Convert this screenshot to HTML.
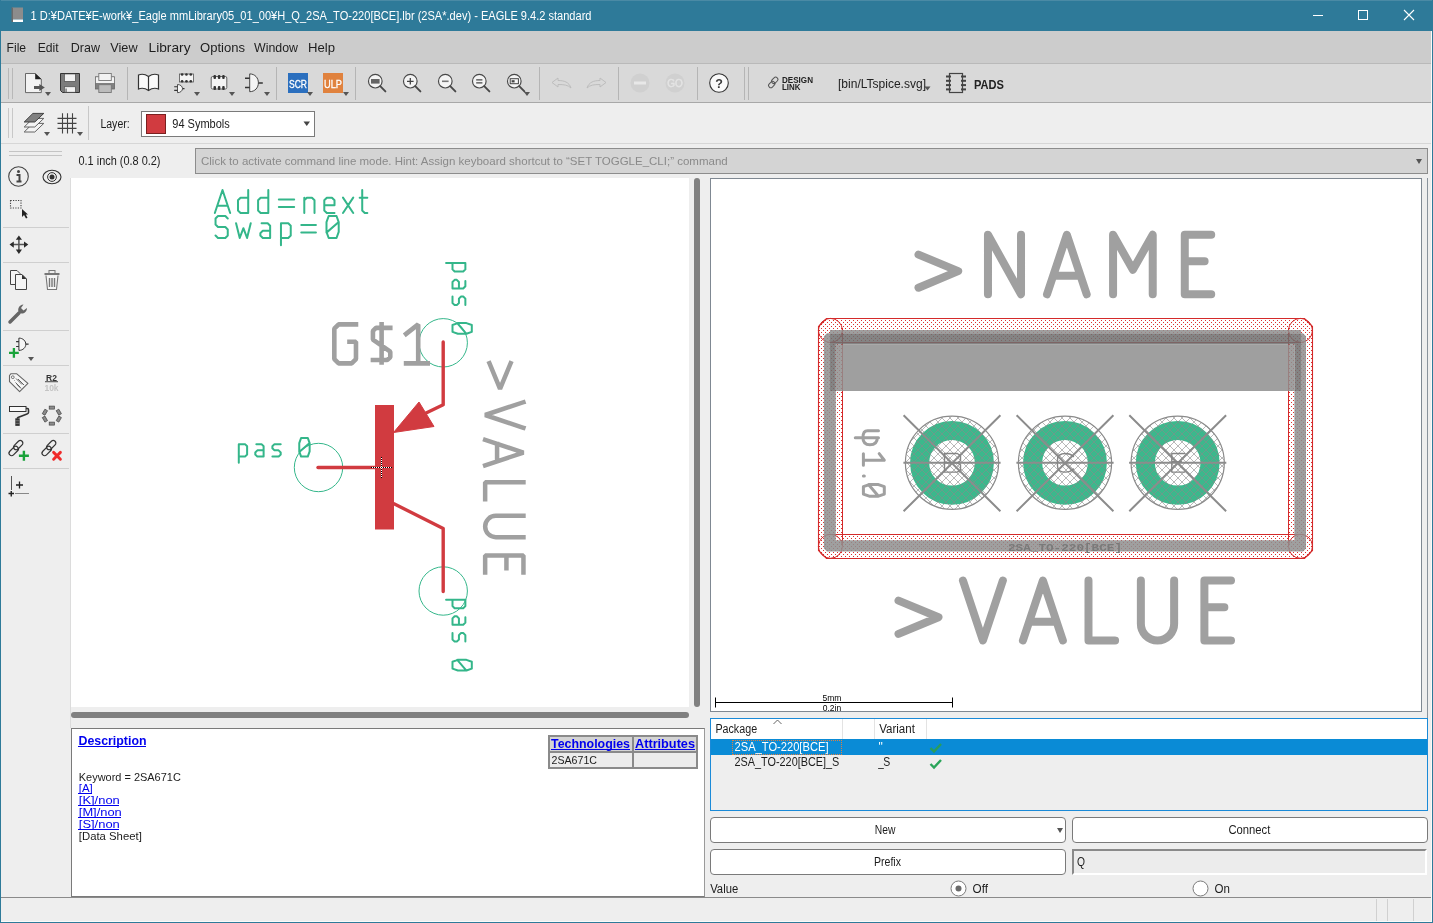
<!DOCTYPE html>
<html><head><meta charset="utf-8"><style>
html,body{margin:0;padding:0}
body{width:1433px;height:923px;overflow:hidden;position:relative;background:#eeeeee;font-family:"Liberation Sans",sans-serif}
.t{position:absolute;white-space:nowrap;line-height:0;height:0}
.t span{display:inline-block;line-height:normal;transform-origin:0 0}
svg{position:absolute;overflow:visible}
#wrap{position:absolute;left:0;top:0;width:1433px;height:923px;will-change:transform;overflow:hidden}
</style></head><body><div id="wrap">
<div style="position:absolute;left:0px;top:0px;width:1433px;height:31px;background:#2e7a99"></div>
<div style="position:absolute;left:0px;top:0px;width:1433px;height:1px;background:#4a8aa5"></div>
<div style="position:absolute;left:0px;top:31px;width:1433px;height:32px;background:#cccccc"></div>
<div style="position:absolute;left:0px;top:63px;width:1433px;height:1px;background:#b9b9b9"></div>
<div style="position:absolute;left:0px;top:64px;width:1433px;height:38px;background:#d9d9d9"></div>
<div style="position:absolute;left:0px;top:102px;width:1433px;height:1px;background:#a8a8a8"></div>
<div style="position:absolute;left:0px;top:103px;width:1433px;height:40px;background:#eeeeee"></div>
<div style="position:absolute;left:0px;top:143px;width:1433px;height:1px;background:#d6d6d6"></div>
<div style="position:absolute;left:0px;top:0px;width:1px;height:923px;background:#2e7a99"></div>
<div style="position:absolute;left:1432px;top:0px;width:1px;height:923px;background:#2e7a99"></div>
<div style="position:absolute;left:1431px;top:31px;width:1px;height:891px;background:#fafafa"></div>
<div style="position:absolute;left:0px;top:922px;width:1433px;height:1px;background:#2e7a99"></div>

<svg style="left:11px;top:7px" width="13" height="16" viewBox="0 0 13 16"><rect x="1" y="0.5" width="11" height="12" fill="#8c8c8c"/><rect x="1" y="12.5" width="11" height="2.5" fill="#ffffff"/><rect x="0.5" y="0.5" width="1.5" height="14.5" fill="#6a6a6a"/></svg>
<svg style="left:1300px;top:0px" width="131" height="31" viewBox="0 0 131 31"><rect x="13" y="15" width="10" height="1" fill="#fff"/><rect x="58.5" y="10.5" width="9" height="9" fill="none" stroke="#fff" stroke-width="1"/><path d="M104 10 L114 20 M114 10 L104 20" stroke="#fff" stroke-width="1.1"/></svg>








<svg style="left:7px;top:68px" width="8" height="31" viewBox="0 0 8 31"><rect x="1" y="0" width="1" height="31" fill="#b8b8b8"/><rect x="5" y="0" width="1" height="31" fill="#b8b8b8"/></svg>
<svg style="left:24px;top:72px" width="22" height="22" viewBox="0 0 22 22"><path d="M1.5 1.5 L11 1.5 L17.3 7.3 L17.3 20.6 L1.5 20.6 Z" fill="#f2f2f2" stroke="#5a5a5a" stroke-width="0.9"/><path d="M11.2 1.2 L17.6 7.3 L11.2 7.3 Z" fill="#222"/><path d="M10 15.5 L16.5 15.5" stroke="#555" stroke-width="3"/><path d="M15.3 12 L20.8 15.5 L15.3 19 Z" fill="#555"/></svg>
<svg style="left:45px;top:92px" width="7" height="5" viewBox="0 0 7 5"><path d="M0 0 L6 0 L3 4 Z" fill="#555"/></svg>
<svg style="left:60px;top:73px" width="20" height="20" viewBox="0 0 20 20"><path d="M0.5 0.5 L19.5 0.5 L19.5 19.5 L2.5 19.5 L0.5 17.5 Z" fill="#7c7c7c" stroke="#333" stroke-width="1"/><rect x="4.5" y="1" width="10.8" height="7.3" fill="#f2f2f2" stroke="#444" stroke-width="0.6"/><rect x="4.5" y="13.8" width="10.8" height="5.4" fill="#f2f2f2" stroke="#444" stroke-width="0.6"/><rect x="5.6" y="15.5" width="0.9" height="3.5" fill="#333"/></svg>
<svg style="left:95px;top:73px" width="20" height="20" viewBox="0 0 20 20"><rect x="0.5" y="3.8" width="19" height="12.2" fill="#808080" stroke="#666" stroke-width="0.8"/><rect x="0.9" y="4.2" width="18.2" height="5.8" fill="#f2f2f2"/><rect x="3.8" y="0.5" width="12.5" height="7" fill="#f2f2f2" stroke="#777" stroke-width="0.9"/><rect x="3.8" y="11.7" width="12.5" height="7.8" fill="#bcbcbc" stroke="#777" stroke-width="0.9"/></svg>
<svg style="left:127px;top:67px" width="1" height="33" viewBox="0 0 1 33"><rect x="0" y="0" width="1" height="33" fill="#b5b5b5"/></svg>
<svg style="left:138px;top:73px" width="21" height="19" viewBox="0 0 21 19"><path d="M10.5 3.5 C7 1 3 1 0.5 2 L0.5 16 C3 15 7 15 10.5 17.5 C14 15 18 15 20.5 16 L20.5 2 C18 1 14 1 10.5 3.5 Z M10.5 3.5 L10.5 17.5" fill="#fafafa" stroke="#333" stroke-width="1.2"/></svg>
<svg style="left:170px;top:70px" width="28" height="26" viewBox="0 0 28 26"><rect x="9.5" y="4" width="14" height="8" fill="#f4f4f4" stroke="#555" stroke-width="0.8"/><circle cx="12.10" cy="4.5" r="1.3" fill="#333"/><circle cx="12.10" cy="11.3" r="1.3" fill="#333"/><circle cx="16.45" cy="4.5" r="1.3" fill="#333"/><circle cx="16.45" cy="11.3" r="1.3" fill="#333"/><circle cx="20.80" cy="4.5" r="1.3" fill="#333"/><circle cx="20.80" cy="11.3" r="1.3" fill="#333"/><path d="M7.5 14.5 C10.5 14.5 12.5 16.5 12.5 18.6 C12.5 20.7 10.5 22.7 7.5 22.7 Z" fill="#f6f6f6" stroke="#444" stroke-width="0.9"/><path d="M4.2 16.8 L7.5 16.8 M4.2 20.4 L7.5 20.4 M12.5 18.6 L14.5 18.6" stroke="#333" stroke-width="1.1"/></svg>
<svg style="left:194px;top:92px" width="7" height="5" viewBox="0 0 7 5"><path d="M0 0 L6 0 L3 4 Z" fill="#555"/></svg>
<svg style="left:208px;top:70px" width="22" height="24" viewBox="0 0 22 24"><rect x="3.2" y="6.5" width="15.6" height="12.5" rx="1.5" fill="#f4f4f4" stroke="#555" stroke-width="0.9"/><rect x="5.50" y="5" width="2.5" height="4" rx="1" fill="#333"/><rect x="5.50" y="16" width="2.5" height="4" rx="1" fill="#333"/><rect x="9.85" y="5" width="2.5" height="4" rx="1" fill="#333"/><rect x="9.85" y="16" width="2.5" height="4" rx="1" fill="#333"/><rect x="14.20" y="5" width="2.5" height="4" rx="1" fill="#333"/><rect x="14.20" y="16" width="2.5" height="4" rx="1" fill="#333"/></svg>
<svg style="left:229px;top:92px" width="7" height="5" viewBox="0 0 7 5"><path d="M0 0 L6 0 L3 4 Z" fill="#555"/></svg>
<svg style="left:244px;top:70px" width="22" height="24" viewBox="0 0 22 24"><path d="M5.7 3.9 C11 3.9 14.4 8 14.4 12.8 C14.4 17.6 11 21.7 5.7 21.7 Z" fill="#f4f4f4" stroke="#444" stroke-width="1"/><path d="M1 8.2 L5.7 8.2 M1 17.4 L5.7 17.4 M14.4 13 L18.8 13" stroke="#333" stroke-width="1.5"/></svg>
<svg style="left:264px;top:92px" width="7" height="5" viewBox="0 0 7 5"><path d="M0 0 L6 0 L3 4 Z" fill="#555"/></svg>
<svg style="left:276px;top:67px" width="1" height="33" viewBox="0 0 1 33"><rect width="1" height="33" fill="#b5b5b5"/></svg>
<svg style="left:288px;top:73px" width="20" height="20" viewBox="0 0 20 20"><rect width="20" height="20" fill="#2b6fbe"/><text x="1" y="14.8" font-size="11.5" fill="#fff" textLength="18" lengthAdjust="spacingAndGlyphs" stroke="#fff" stroke-width="0.3">SCR</text></svg>
<svg style="left:307px;top:92px" width="7" height="5" viewBox="0 0 7 5"><path d="M0 0 L6 0 L3 4 Z" fill="#555"/></svg>
<svg style="left:323px;top:73px" width="20" height="20" viewBox="0 0 20 20"><rect width="20" height="20" fill="#e0823e"/><text x="1" y="14.8" font-size="11.5" fill="#fff" textLength="18" lengthAdjust="spacingAndGlyphs" stroke="#fff" stroke-width="0.3">ULP</text></svg>
<svg style="left:343px;top:92px" width="7" height="5" viewBox="0 0 7 5"><path d="M0 0 L6 0 L3 4 Z" fill="#555"/></svg>
<svg style="left:355px;top:67px" width="1" height="33" viewBox="0 0 1 33"><rect width="1" height="33" fill="#b5b5b5"/></svg>
<svg style="left:368px;top:73px" width="20" height="20" viewBox="0 0 20 20"><circle cx="7.3" cy="8.2" r="6.8" fill="#f4f4f4" stroke="#484848" stroke-width="1.15"/><path d="M12.2 13.2 L17.4 18.4" stroke="#484848" stroke-width="1.9" stroke-linecap="round"/><rect x="3" y="6" width="8.6" height="4.6" fill="#666"/></svg>
<svg style="left:403px;top:73px" width="20" height="20" viewBox="0 0 20 20"><circle cx="7.3" cy="8.2" r="6.8" fill="#f4f4f4" stroke="#484848" stroke-width="1.15"/><path d="M12.2 13.2 L17.4 18.4" stroke="#484848" stroke-width="1.9" stroke-linecap="round"/><path d="M4 8.3 L10.6 8.3 M7.3 5 L7.3 11.6" stroke="#444" stroke-width="1.3"/></svg>
<svg style="left:438px;top:73px" width="20" height="20" viewBox="0 0 20 20"><circle cx="7.3" cy="8.2" r="6.8" fill="#f4f4f4" stroke="#484848" stroke-width="1.15"/><path d="M12.2 13.2 L17.4 18.4" stroke="#484848" stroke-width="1.9" stroke-linecap="round"/><path d="M4 8.3 L10.6 8.3" stroke="#777" stroke-width="1.6"/></svg>
<svg style="left:472px;top:73px" width="20" height="20" viewBox="0 0 20 20"><circle cx="7.3" cy="8.2" r="6.8" fill="#f4f4f4" stroke="#484848" stroke-width="1.15"/><path d="M12.2 13.2 L17.4 18.4" stroke="#484848" stroke-width="1.9" stroke-linecap="round"/><path d="M4.2 6.8 L10.4 6.8 M4.2 9.8 L10.4 9.8" stroke="#444" stroke-width="1.2"/></svg>
<svg style="left:507px;top:73px" width="20" height="20" viewBox="0 0 20 20"><circle cx="7.3" cy="8.2" r="6.8" fill="#f4f4f4" stroke="#484848" stroke-width="1.15"/><path d="M12.2 13.2 L17.4 18.4" stroke="#484848" stroke-width="1.9" stroke-linecap="round"/><rect x="3.2" y="5.7" width="8.2" height="5" fill="none" stroke="#444" stroke-width="1"/><rect x="4.6" y="7.2" width="3" height="2.2" fill="#444"/></svg>
<svg style="left:524px;top:92px" width="7" height="5" viewBox="0 0 7 5"><path d="M0 0 L6 0 L3 4 Z" fill="#555"/></svg>
<svg style="left:539px;top:67px" width="1" height="33" viewBox="0 0 1 33"><rect width="1" height="33" fill="#b5b5b5"/></svg>
<svg style="left:551px;top:77px" width="21" height="12" viewBox="0 0 21 12"><path d="M1 5.5 L7 1 L7 3.5 C13 3.5 18 5 20 11 C17 8 13 7.5 7 7.5 L7 10 Z" fill="none" stroke="#bdbdbd" stroke-width="1"/></svg>
<svg style="left:586px;top:77px" width="21" height="12" viewBox="0 0 21 12"><path d="M20 5.5 L14 1 L14 3.5 C8 3.5 3 5 1 11 C4 8 8 7.5 14 7.5 L14 10 Z" fill="none" stroke="#bdbdbd" stroke-width="1"/></svg>
<svg style="left:618px;top:67px" width="1" height="33" viewBox="0 0 1 33"><rect width="1" height="33" fill="#b5b5b5"/></svg>
<svg style="left:630px;top:73px" width="20" height="20" viewBox="0 0 20 20"><circle cx="10" cy="10" r="9.5" fill="#d0d0d0"/><rect x="4" y="8.5" width="12" height="3" fill="#e8e8e8"/></svg>
<svg style="left:665px;top:73px" width="20" height="20" viewBox="0 0 20 20"><circle cx="10" cy="10" r="9.5" fill="#d0d0d0"/><text x="10" y="14" font-size="10" fill="#e4e4e4" text-anchor="middle" stroke="#e4e4e4" stroke-width="0.4">GO</text></svg>
<svg style="left:697px;top:67px" width="1" height="33" viewBox="0 0 1 33"><rect width="1" height="33" fill="#b5b5b5"/></svg>
<svg style="left:709px;top:73px" width="20" height="20" viewBox="0 0 20 20"><circle cx="10" cy="10" r="9.3" fill="#fafafa" stroke="#333" stroke-width="1.1"/><text x="10" y="14.6" font-size="12.5" font-weight="bold" fill="#3a3a3a" text-anchor="middle">?</text></svg>
<svg style="left:744px;top:67px" width="6" height="33" viewBox="0 0 6 33"><rect x="0" width="1" height="33" fill="#b5b5b5"/><rect x="4" width="1" height="33" fill="#b5b5b5"/></svg>
<svg style="left:767px;top:76px" width="13" height="13" viewBox="0 0 13 13"><g fill="none" stroke="#555" stroke-width="1"><rect x="5.5" y="0.8" width="4.5" height="7" rx="2.2" transform="rotate(45 7.7 4.3)"/><rect x="2.5" y="5" width="4.5" height="7" rx="2.2" transform="rotate(45 4.7 8.5)"/></g></svg>
<svg style="left:7px;top:108px" width="8" height="30" viewBox="0 0 8 30"><rect x="1" width="1" height="30" fill="#c8c8c8"/><rect x="5" width="1" height="30" fill="#c8c8c8"/></svg>
<svg style="left:20px;top:108px" width="30" height="30" viewBox="0 0 30 30"><path d="M4.2 24 L12.9 15.4 L23.8 15.4 L14.8 24 Z" fill="#f4f4f4" stroke="#555" stroke-width="0.9"/><path d="M4.2 19 L12.9 10.4 L23.8 10.4 L14.8 19 Z" fill="#f4f4f4" stroke="#555" stroke-width="0.9"/><path d="M4.2 14 L12.9 5.4 L23.8 5.4 L14.8 14 Z" fill="#808080" stroke="#333" stroke-width="0.9"/></svg>
<svg style="left:44px;top:132px" width="7" height="5" viewBox="0 0 7 5"><path d="M0 0 L6 0 L3 4 Z" fill="#555"/></svg>
<svg style="left:55px;top:108px" width="25" height="26" viewBox="0 0 25 26"><path d="M2.5 10.4 H21.5 M2.5 15.4 H21.5 M2.5 20.4 H21.5 M7.5 5.2 V25.5 M12.5 5.2 V25.5 M17.5 5.2 V25.5" stroke="#444" stroke-width="1.1"/></svg>
<svg style="left:77px;top:132px" width="7" height="5" viewBox="0 0 7 5"><path d="M0 0 L6 0 L3 4 Z" fill="#555"/></svg>
<svg style="left:88px;top:106px" width="1" height="34" viewBox="0 0 1 34"><rect width="1" height="34" fill="#c8c8c8"/></svg>



<svg style="left:924px;top:86px" width="8" height="6"><path d="M0.5 0.5 L6.5 0.5 L3.5 4.5 Z" fill="#555"/></svg>
<svg style="left:946px;top:73px" width="21" height="21"><rect x="3.5" y="0.5" width="13" height="19" fill="none" stroke="#444" stroke-width="1.2"/><rect x="0" y="2.5" width="5" height="2" fill="#444"/><rect x="15" y="2.5" width="5" height="2" fill="#444"/><rect x="0" y="6.8" width="5" height="2" fill="#444"/><rect x="15" y="6.8" width="5" height="2" fill="#444"/><rect x="0" y="11.1" width="5" height="2" fill="#444"/><rect x="15" y="11.1" width="5" height="2" fill="#444"/><rect x="0" y="15.4" width="5" height="2" fill="#444"/><rect x="15" y="15.4" width="5" height="2" fill="#444"/></svg>

<div style="position:absolute;left:141px;top:111px;width:174px;height:26px;background:#fff;border:1px solid #7a7a7a;box-sizing:border-box"></div>
<div style="position:absolute;left:146px;top:114px;width:20px;height:20px;background:#d13b40;border:1px solid #7a2020;box-sizing:border-box"></div>

<svg style="left:303px;top:121px" width="8" height="6"><path d="M0.5 0.5 L7 0.5 L3.75 5 Z" fill="#444"/></svg>

<div style="position:absolute;left:1px;top:144px;width:69px;height:753px;background:#eeeeee"></div>
<svg style="left:9px;top:150px" width="54" height="7" viewBox="0 0 54 7"><rect x="0" y="1" width="53" height="1" fill="#c4c4c4"/><rect x="0" y="5" width="53" height="1" fill="#c4c4c4"/></svg>
<svg style="left:3px;top:227px" width="66" height="1" viewBox="0 0 66 1"><rect width="66" height="1" fill="#cfcfcf"/></svg>
<svg style="left:3px;top:262px" width="66" height="1" viewBox="0 0 66 1"><rect width="66" height="1" fill="#cfcfcf"/></svg>
<svg style="left:3px;top:330px" width="66" height="1" viewBox="0 0 66 1"><rect width="66" height="1" fill="#cfcfcf"/></svg>
<svg style="left:3px;top:365px" width="66" height="1" viewBox="0 0 66 1"><rect width="66" height="1" fill="#cfcfcf"/></svg>
<svg style="left:3px;top:433px" width="66" height="1" viewBox="0 0 66 1"><rect width="66" height="1" fill="#cfcfcf"/></svg>
<svg style="left:3px;top:468px" width="66" height="1" viewBox="0 0 66 1"><rect width="66" height="1" fill="#cfcfcf"/></svg>
<svg style="left:8px;top:166px" width="22" height="22" viewBox="0 0 22 22"><circle cx="10.5" cy="10.5" r="9.8" fill="none" stroke="#444" stroke-width="1.1"/><circle cx="10.5" cy="5.5" r="1.5" fill="#444"/><path d="M8.5 9 L11.5 9 L11.5 15 M8.5 15.5 L13.5 15.5" stroke="#444" stroke-width="2" fill="none"/></svg>
<svg style="left:41px;top:167px" width="22" height="20" viewBox="0 0 22 20"><ellipse cx="11" cy="10" rx="9" ry="6.7" fill="none" stroke="#333" stroke-width="1.1"/><circle cx="11" cy="10" r="4.4" fill="none" stroke="#333" stroke-width="1"/><circle cx="11" cy="10" r="2.5" fill="#333"/></svg>
<svg style="left:9px;top:199px" width="21" height="21" viewBox="0 0 21 21"><rect x="1.5" y="1.5" width="10.5" height="7.5" fill="none" stroke="#444" stroke-width="1.1" stroke-dasharray="1.2 1.3"/><path d="M13 10 L13 18 L15 16 L17 19.5 L18.5 18.8 L16.8 15.5 L19 15.5 Z" fill="#222"/></svg>
<svg style="left:9px;top:235px" width="20" height="20" viewBox="0 0 20 20"><path d="M3 9.6 H16.8 M9.9 3 V16.4" stroke="#555" stroke-width="1.5"/><path d="M9.9 0.4 L6.8 4.7 L13 4.7 Z M9.9 18.9 L6.8 14.6 L13 14.6 Z M0.5 9.6 L4.8 6.5 L4.8 12.7 Z M19.3 9.6 L15 6.5 L15 12.7 Z" fill="#2a2a2a"/></svg>
<svg style="left:10px;top:270px" width="18" height="20" viewBox="0 0 18 20"><path d="M0.5 0.5 L7 0.5 L10 3.5 L10 14.5 L0.5 14.5 Z" fill="#f4f4f4" stroke="#444"/><path d="M5.5 4.5 L12 4.5 L16.5 9 L16.5 19.5 L5.5 19.5 Z" fill="#f4f4f4" stroke="#444"/><path d="M12 4.5 L16.5 9 L12 9 Z" fill="#333"/></svg>
<svg style="left:44px;top:270px" width="16" height="20" viewBox="0 0 16 20"><rect x="0.5" y="3" width="15" height="2" fill="#777"/><rect x="5" y="0.5" width="6" height="3" fill="none" stroke="#777"/><path d="M2 5.5 L3.5 19.5 L12.5 19.5 L14 5.5" fill="#f6f6f6" stroke="#777" stroke-width="1.1"/><path d="M5.5 8 V17 M8 8 V17 M10.5 8 V17" stroke="#777" stroke-width="1.4"/></svg>
<svg style="left:8px;top:303px" width="21" height="21" viewBox="0 0 21 21"><path d="M2 19 L11 10" stroke="#666" stroke-width="3.5" stroke-linecap="round"/><path d="M11 10 C9 6 11 2 15.5 1.5 L13 5 L15.5 7.5 L19 5 C19 9.5 15 11.5 11 10 Z" fill="#666"/></svg>
<svg style="left:8px;top:337px" width="27" height="24" viewBox="0 0 27 24"><path d="M10.9 1.1 C15 1.1 17.8 4 17.8 7.2 C17.8 10.5 15 13.4 10.9 13.4 Z" fill="#f6f6f6" stroke="#333" stroke-width="1"/><path d="M8.1 4.7 L10.9 4.7 M8.1 9.5 L10.9 9.5 M17.8 7.1 L20.6 7.1" stroke="#333" stroke-width="1.2"/><path d="M1 15.8 L10.8 15.8 M5.9 11 L5.9 20.8" stroke="#1aa33a" stroke-width="2.3"/></svg>
<svg style="left:28px;top:357px" width="7" height="5" viewBox="0 0 7 5"><path d="M0 0 L6 0 L3 4 Z" fill="#555"/></svg>
<svg style="left:44px;top:373px" width="16" height="19" viewBox="0 0 16 19"><text x="7.5" y="8" font-size="8.5" font-weight="bold" fill="#333" text-anchor="middle">R2</text><rect x="1" y="8.3" width="13" height="0.9" fill="#333"/><text x="7.5" y="17.5" font-size="8.5" font-weight="bold" fill="#c4c4c4" text-anchor="middle">10k</text></svg>
<svg style="left:0px;top:360px" width="70" height="70" viewBox="0 0 70 70"><path d="M9.5 15.5 L9.5 21.6 L19.6 31.7 L27.9 23.4 L16.5 13.7 L11 13.7 Z" fill="#f6f6f6" stroke="#666" stroke-width="1.1" stroke-linejoin="round"/><circle cx="12.8" cy="17.2" r="1.4" fill="none" stroke="#666" stroke-width="0.9"/><path d="M14.5 20.5 L15 21 M16 18.5 L22 24.5 M15.5 22.5 L20.5 27.5 M18 19 L24 25 M17 24.5 L21 28.5" stroke="#555" stroke-width="0.9"/><rect x="9.5" y="46.5" width="16.5" height="5" fill="#fafafa" stroke="#333" stroke-width="1"/><path d="M26 48.5 L27.5 48.5 Q28.5 48.5 28.5 50 L28.5 52.5 Q28.5 53.5 27 54 L18 57.5 L17 58.5" fill="none" stroke="#333" stroke-width="1.6"/><rect x="15.3" y="58.3" width="4.4" height="7.6" fill="#333"/><path d="M15.3 60.8 H19.7 M15.3 63.3 H19.7" stroke="#999" stroke-width="0.7"/><rect x="49.2" y="46.1" width="5.2" height="3" fill="#8c8c8c" stroke="#444" stroke-width="0.7" transform="rotate(0 51.8 47.6)"/><rect x="49.2" y="62.1" width="5.2" height="3" fill="#8c8c8c" stroke="#444" stroke-width="0.7" transform="rotate(0 51.8 63.6)"/><rect x="42.3" y="50.7" width="5.2" height="3" fill="#8c8c8c" stroke="#444" stroke-width="0.7" transform="rotate(-60 44.9 52.2)"/><rect x="56.2" y="50.7" width="5.2" height="3" fill="#8c8c8c" stroke="#444" stroke-width="0.7" transform="rotate(60 58.8 52.2)"/><rect x="42.3" y="57.6" width="5.2" height="3" fill="#8c8c8c" stroke="#444" stroke-width="0.7" transform="rotate(60 44.9 59.1)"/><rect x="56.2" y="57.6" width="5.2" height="3" fill="#8c8c8c" stroke="#444" stroke-width="0.7" transform="rotate(-60 58.8 59.1)"/></svg>
<svg style="left:8px;top:441px" width="26" height="24" viewBox="0 0 26 24"><g fill="none" stroke="#333" stroke-width="1.2"><rect x="4.7" y="1.5" width="11" height="5.2" rx="2.6" transform="rotate(-45 10.2 4.1)"/><rect x="0.2" y="7.4" width="11" height="5.2" rx="2.6" transform="rotate(-45 5.7 10)"/></g><path d="M10.9 14.8 L20.9 14.8 M15.9 9.8 L15.9 19.8" stroke="#1aa33a" stroke-width="2.4"/></svg>
<svg style="left:41px;top:441px" width="26" height="24" viewBox="0 0 26 24"><g fill="none" stroke="#333" stroke-width="1.2"><rect x="4.7" y="1.5" width="11" height="5.2" rx="2.6" transform="rotate(-45 10.2 4.1)"/><rect x="0.2" y="7.4" width="11" height="5.2" rx="2.6" transform="rotate(-45 5.7 10)"/></g><path d="M12.6 11.4 L19.4 18.2 M19.4 11.4 L12.6 18.2" stroke="#f02a2a" stroke-width="2.9" stroke-linecap="round"/></svg>
<svg style="left:0px;top:470px" width="40" height="30" viewBox="0 0 40 30"><path d="M11.5 6 L11.5 20" stroke="#555" stroke-width="1"/><path d="M15 23.5 L29 23.5" stroke="#888" stroke-width="1"/><path d="M8.5 23.5 L14 23.5 M11.25 21 L11.25 26.5" stroke="#222" stroke-width="1.4"/><path d="M16 15 L23 15 M19.5 11.5 L19.5 18.5" stroke="#222" stroke-width="1.3"/></svg>

<div style="position:absolute;left:195px;top:148px;width:1233px;height:26px;background:#d4d4d4;border:1px solid #8c8c8c;box-sizing:border-box"></div>

<svg style="position:absolute;left:1413px;top:156px" width="12" height="10"><path d="M3 3 L9 3 L6 8 Z" fill="#555"/></svg>
<div style="position:absolute;left:71px;top:178px;width:618px;height:529px;background:#ffffff"></div>
<div style="position:absolute;left:70px;top:178px;width:1px;height:550px;background:#dcdcdc"></div>
<div style="position:absolute;left:689px;top:178px;width:20px;height:529px;background:#eeeeee"></div>
<div style="position:absolute;left:694px;top:178px;width:6px;height:529px;background:#808080;border-radius:3px"></div>
<div style="position:absolute;left:71px;top:707px;width:638px;height:21px;background:#eeeeee"></div>
<div style="position:absolute;left:71px;top:712px;width:618px;height:6px;background:#808080;border-radius:3px"></div>
<div style="position:absolute;left:710px;top:178px;width:712px;height:534px;background:#ffffff;border:1px solid #7f8892;box-sizing:border-box"></div>
<div style="position:absolute;left:1427px;top:178px;width:1px;height:540px;background:#8a939c"></div>
<div style="position:absolute;left:71px;top:728px;width:634px;height:169px;background:#ffffff;border:1px solid #7a7a7a;border-right:1px solid #9a9a9a;box-sizing:border-box"></div>







<div style="position:absolute;left:548px;top:735px;width:150px;height:34px;background:#8a8a8a"></div>
<div style="position:absolute;left:550px;top:737px;width:82px;height:14px;background:#d4d4d4"></div>
<div style="position:absolute;left:634px;top:737px;width:62px;height:14px;background:#d4d4d4"></div>
<div style="position:absolute;left:550px;top:753px;width:82px;height:14px;background:#ececec"></div>
<div style="position:absolute;left:634px;top:753px;width:62px;height:14px;background:#ececec"></div>



<div style="position:absolute;left:710px;top:718px;width:718px;height:93px;background:#eeeeee;border:1px solid #1a8ad8;box-sizing:border-box"></div>
<div style="position:absolute;left:711px;top:719px;width:716px;height:20px;background:#ffffff"></div>
<div style="position:absolute;left:842px;top:719px;width:1px;height:20px;background:#e3e3e3"></div>
<div style="position:absolute;left:874px;top:719px;width:1px;height:20px;background:#e3e3e3"></div>
<div style="position:absolute;left:926px;top:719px;width:1px;height:20px;background:#e3e3e3"></div>

<svg style="position:absolute;left:772px;top:718px" width="12" height="8"><path d="M1.5 6 L5.5 2 L9.5 6" fill="none" stroke="#666" stroke-width="1"/></svg>

<div style="position:absolute;left:711px;top:739px;width:716px;height:16px;background:#0a8bd6"></div>
<div style="position:absolute;left:732px;top:739.5px;width:110px;height:15px;border:1px dotted #e08040;box-sizing:border-box"></div>





<svg style="position:absolute;left:929px;top:742px" width="14" height="12"><path d="M1.5 6 L5 9.5 L12 2" fill="none" stroke="#2a9d5a" stroke-width="2.4"/></svg>
<svg style="position:absolute;left:929px;top:758px" width="14" height="12"><path d="M1.5 6 L5 9.5 L12 2" fill="none" stroke="#2aa55a" stroke-width="2.4"/></svg>
<div style="position:absolute;left:710px;top:817px;width:356px;height:26px;background:#ffffff;border:1px solid #7a7a7a;border-radius:4px;box-sizing:border-box"></div>

<svg style="position:absolute;left:1055px;top:826px" width="10" height="8"><path d="M2 2 L8 2 L5 7 Z" fill="#555"/></svg>
<div style="position:absolute;left:1072px;top:817px;width:356px;height:26px;background:#ffffff;border:1px solid #7a7a7a;border-radius:4px;box-sizing:border-box"></div>

<div style="position:absolute;left:710px;top:849px;width:356px;height:26px;background:#ffffff;border:1px solid #7a7a7a;border-radius:4px;box-sizing:border-box"></div>

<div style="position:absolute;left:1072px;top:849px;width:355px;height:26px;background:#ececec;border-top:2px solid #8a8a8a;border-left:2px solid #8a8a8a;border-bottom:2px solid #fff;border-right:2px solid #fff;box-sizing:border-box"></div>


<svg style="position:absolute;left:950px;top:880px" width="18" height="18"><circle cx="8.5" cy="8.5" r="7.5" fill="#fff" stroke="#7a7a7a"/><circle cx="8.5" cy="8.5" r="3" fill="#6a6a6a"/></svg>

<svg style="position:absolute;left:1192px;top:880px" width="18" height="18"><circle cx="8.5" cy="8.5" r="7.5" fill="#fff" stroke="#7a7a7a"/></svg>

<div style="position:absolute;left:1px;top:897px;width:1430px;height:1px;background:#8a8a8a"></div>
<div style="position:absolute;left:1px;top:898px;width:1430px;height:23px;background:#eeeeee"></div>
<div style="position:absolute;left:1px;top:921px;width:1430px;height:1px;background:#fafafa"></div>
<div style="position:absolute;left:1376px;top:899px;width:1px;height:22px;background:#d0d0d0"></div>
<div style="position:absolute;left:1387px;top:899px;width:1px;height:22px;background:#d0d0d0"></div>
<div style="position:absolute;left:1413px;top:899px;width:1px;height:22px;background:#d0d0d0"></div>
<svg style="left:0;top:0" width="1433" height="923"><defs><clipPath id="lc"><rect x="71" y="178" width="618" height="529"/></clipPath></defs><g clip-path="url(#lc)"><path d="M 214.83 213.00 L 222.50 190.00 L 230.17 213.00 M 217.39 205.84 L 227.61 205.84 M 248.21 190.00 L 248.21 213.00 L 240.54 213.00 L 237.99 210.44 L 237.99 200.22 L 240.54 197.67 L 248.21 197.67 M 268.31 190.00 L 268.31 213.00 L 260.64 213.00 L 258.09 210.44 L 258.09 200.22 L 260.64 197.67 L 268.31 197.67 M 278.83 199.46 L 294.17 199.46 M 278.83 207.12 L 294.17 207.12 M 304.29 197.67 L 304.29 213.00 M 304.29 200.22 L 306.84 197.67 L 311.96 197.67 L 314.51 200.22 L 314.51 213.00 M 324.29 205.33 L 334.51 205.33 L 334.51 200.22 L 331.96 197.67 L 326.84 197.67 L 324.29 200.22 L 324.29 210.44 L 326.84 213.00 L 334.51 213.00 M 342.99 197.67 L 353.21 213.00 M 342.99 213.00 L 353.21 197.67 M 362.22 190.00 L 362.22 210.44 L 364.78 213.00 L 367.33 213.00 M 359.67 197.67 L 367.33 197.67" fill="none" stroke="#34b68a" stroke-width="2" stroke-linecap="round" stroke-linejoin="round"/><path d="M 227.76 218.44 L 225.32 216.00 L 217.98 216.00 L 215.54 218.44 L 215.54 224.56 L 217.98 227.00 L 225.32 227.00 L 227.76 229.44 L 227.76 235.56 L 225.32 238.00 L 217.98 238.00 L 215.54 235.56 M 236.07 223.33 L 239.73 238.00 L 243.40 228.22 L 247.07 238.00 L 250.73 223.33 M 261.58 223.33 L 267.69 223.33 L 270.14 225.78 L 270.14 238.00 L 262.81 238.00 L 260.36 235.56 L 260.36 233.11 L 262.81 230.67 L 270.14 230.67 M 280.96 245.33 L 280.96 223.33 L 288.29 223.33 L 290.74 225.78 L 290.74 235.56 L 288.29 238.00 L 280.96 238.00 M 301.27 225.04 L 315.93 225.04 M 301.27 232.38 L 315.93 232.38 M 328.69 216.00 L 336.51 216.00 L 338.71 222.11 L 338.71 231.89 L 336.51 238.00 L 328.69 238.00 L 326.49 231.89 L 326.49 222.11 Z M 326.49 232.62 L 338.71 222.11" fill="none" stroke="#34b68a" stroke-width="2" stroke-linecap="round" stroke-linejoin="round"/><path d="M 238.79 462.83 L 238.79 444.13 L 245.03 444.13 L 247.11 446.21 L 247.11 454.52 L 245.03 456.60 L 238.79 456.60 M 256.33 444.13 L 261.53 444.13 L 263.61 446.21 L 263.61 456.60 L 257.37 456.60 L 255.29 454.52 L 255.29 452.44 L 257.37 450.37 L 263.61 450.37 M 280.71 444.13 L 274.47 444.13 L 272.39 446.21 L 272.39 448.29 L 274.47 450.37 L 278.63 450.37 L 280.71 452.44 L 280.71 454.52 L 278.63 456.60 L 272.39 456.60 M 301.13 437.90 L 307.77 437.90 L 309.64 443.09 L 309.64 451.41 L 307.77 456.60 L 301.13 456.60 L 299.26 451.41 L 299.26 443.09 Z M 299.26 452.03 L 309.64 443.09" fill="none" stroke="#34b68a" stroke-width="2" stroke-linecap="round" stroke-linejoin="round"/><path d="M 446.07 262.96 L 465.37 262.96 L 465.37 269.39 L 463.22 271.54 L 454.64 271.54 L 452.50 269.39 L 452.50 262.96 M 465.37 280.93 L 465.37 286.29 L 463.22 288.44 L 452.50 288.44 L 452.50 282.01 L 454.64 279.86 L 456.79 279.86 L 458.93 282.01 L 458.93 288.44 M 465.37 305.09 L 465.37 298.66 L 463.22 296.51 L 461.08 296.51 L 458.93 298.66 L 458.93 302.94 L 456.79 305.09 L 454.64 305.09 L 452.50 302.94 L 452.50 296.51 M 471.80 325.02 L 471.80 331.88 L 466.44 333.81 L 457.86 333.81 L 452.50 331.88 L 452.50 325.02 L 457.86 323.09 L 466.44 323.09 Z M 457.22 323.09 L 466.44 333.81" fill="none" stroke="#34b68a" stroke-width="2" stroke-linecap="round" stroke-linejoin="round"/><path d="M 446.07 599.66 L 465.37 599.66 L 465.37 606.09 L 463.22 608.24 L 454.64 608.24 L 452.50 606.09 L 452.50 599.66 M 465.37 617.28 L 465.37 622.64 L 463.22 624.79 L 452.50 624.79 L 452.50 618.36 L 454.64 616.21 L 456.79 616.21 L 458.93 618.36 L 458.93 624.79 M 465.37 641.59 L 465.37 635.16 L 463.22 633.01 L 461.08 633.01 L 458.93 635.16 L 458.93 639.44 L 456.79 641.59 L 454.64 641.59 L 452.50 639.44 L 452.50 633.01 M 471.80 661.77 L 471.80 668.63 L 466.44 670.56 L 457.86 670.56 L 452.50 668.63 L 452.50 661.77 L 457.86 659.84 L 466.44 659.84 Z M 457.22 659.84 L 466.44 670.56" fill="none" stroke="#34b68a" stroke-width="2" stroke-linecap="round" stroke-linejoin="round"/><circle cx="443.2" cy="342.8" r="24.2" fill="none" stroke="#34b68a" stroke-width="1"/><circle cx="318.5" cy="467.5" r="24.2" fill="none" stroke="#34b68a" stroke-width="1"/><circle cx="443.2" cy="591" r="24.2" fill="none" stroke="#34b68a" stroke-width="1"/><path d="M 355.98 324.40 L 338.65 324.40 L 334.32 328.73 L 334.32 359.07 L 338.65 363.40 L 351.65 363.40 L 355.98 359.07 L 355.98 341.73 L 349.48 341.73 M 390.27 327.87 L 375.97 327.87 L 372.93 330.90 L 372.93 339.57 L 390.27 351.70 L 390.27 357.33 L 387.23 359.93 L 372.93 359.93 M 381.60 324.40 L 381.60 362.53 M 406.07 333.93 L 418.20 324.40 L 418.20 363.40 M 406.07 363.40 L 427.73 363.40" fill="none" stroke="#a0a0a0" stroke-width="4.6" stroke-linecap="square" stroke-linejoin="bevel"/><path d="M 510.68 363.23 L 500.04 388.77 L 489.41 363.23 M 523.45 402.23 L 485.15 415.00 L 523.45 427.77 M 485.15 439.83 L 523.45 452.60 L 485.15 465.37 M 497.07 444.09 L 497.07 461.11 M 523.45 482.19 L 485.15 482.19 L 485.15 499.21 M 523.45 515.86 L 495.79 515.86 C 489.92 515.86 485.15 520.63 485.15 526.50 C 485.15 532.37 489.92 537.14 495.79 537.14 L 523.45 537.14 M 523.45 572.51 L 523.45 555.49 L 485.15 555.49 L 485.15 572.51 M 506.43 555.49 L 506.43 568.26" fill="none" stroke="#a0a0a0" stroke-width="4.5" stroke-linecap="square" stroke-linejoin="bevel"/><rect x="375" y="405" width="19" height="124.5" fill="#d13b40"/><path d="M318 467.5 L381 467.5" stroke="#d13b40" stroke-width="3.4" stroke-linecap="round"/><path d="M443.2 342 L443.2 404.8 L424 414" fill="none" stroke="#d13b40" stroke-width="3.4" stroke-linecap="round" stroke-linejoin="round"/><path d="M419 402 L434 426.5 L393.5 432.5 Z" fill="#d13b40" stroke="#d13b40" stroke-width="1" stroke-linejoin="round"/><path d="M394 503.8 L443.2 528.4 L443.2 591.5" fill="none" stroke="#d13b40" stroke-width="3.4" stroke-linecap="round" stroke-linejoin="round"/><path d="M371 467.5 L392 467.5 M381.5 457 L381.5 478" stroke="#ffffff" stroke-width="1"/><path d="M371 467.5 L392 467.5 M381.5 457 L381.5 478" stroke="#000" stroke-width="1" stroke-dasharray="1 1"/></g></svg>
<svg style="left:0;top:0" width="1433" height="923"><defs>
<pattern id="dots" x="0" y="0" width="4" height="4" patternUnits="userSpaceOnUse"><rect x="1" y="0" width="1" height="1" fill="#dd2e2e"/><rect x="3" y="2" width="1" height="1" fill="#dd2e2e"/></pattern>
<pattern id="hatch" x="0" y="0" width="8" height="8" patternUnits="userSpaceOnUse"><path d="M-1 9 L9 -1 M3 -1 L9 5 M-1 3 L5 9" stroke="#8a8a8a" stroke-width="0.6"/></pattern>
<clipPath id="rc"><rect x="711" y="179" width="710" height="532"/></clipPath>
</defs><g clip-path="url(#rc)"><path d="M 918.52 254.63 L 958.18 271.16 L 918.52 287.69 M 987.97 294.30 L 987.97 234.80 L 1021.03 294.30 L 1021.03 234.80 M 1047.02 294.30 L 1066.85 234.80 L 1086.68 294.30 M 1053.63 275.79 L 1080.07 275.79 M 1113.07 294.30 L 1113.07 234.80 L 1132.90 269.84 L 1152.73 234.80 L 1152.73 294.30 M 1211.22 234.80 L 1184.78 234.80 L 1184.78 294.30 L 1211.22 294.30 M 1184.78 261.24 L 1204.61 261.24" fill="none" stroke="#a0a0a0" stroke-width="8" stroke-linecap="round" stroke-linejoin="round"/><path d="M 898.53 600.57 L 938.47 617.21 L 898.53 633.84 M 962.93 580.60 L 982.90 640.50 L 1002.87 580.60 M 1022.93 640.50 L 1042.90 580.60 L 1062.87 640.50 M 1029.59 621.86 L 1056.21 621.86 M 1088.49 580.60 L 1088.49 640.50 L 1115.11 640.50 M 1140.86 580.60 L 1140.86 623.86 C 1140.86 633.05 1148.32 640.50 1157.50 640.50 C 1166.68 640.50 1174.14 633.05 1174.14 623.86 L 1174.14 580.60 M 1231.01 580.60 L 1204.39 580.60 L 1204.39 640.50 L 1231.01 640.50 M 1204.39 607.22 L 1224.36 607.22" fill="none" stroke="#a0a0a0" stroke-width="8" stroke-linecap="round" stroke-linejoin="round"/><path fill="url(#dots)" d="M826.5 318.5 L1304.5 318.5 L1312.5 326.5 L1312.5 550.5 L1304.5 558.5 L826.5 558.5 L818.5 550.5 L818.5 326.5 Z M842.5 342.4 L842.5 534.2 L1288.4 534.2 L1288.4 342.4 Z" fill-rule="evenodd"/><path fill="none" stroke="#d42a2a" stroke-width="1.1" d="M826.5 318.5 L1304.5 318.5 L1312.5 326.5 L1312.5 550.5 L1304.5 558.5 L826.5 558.5 L818.5 550.5 L818.5 326.5 Z"/><path fill="none" stroke="#d42a2a" stroke-width="1" d="M842.5 328 L842.5 546 M828 342.5 L1303 342.5 M1288.5 328 L1288.5 546 M828 534.5 L1303 534.5"/><circle cx="830.4" cy="330.4" r="12" fill="none" stroke="#d42a2a" stroke-width="1"/><circle cx="1300.5" cy="330.4" r="12" fill="none" stroke="#d42a2a" stroke-width="1"/><circle cx="830.4" cy="546.3" r="12" fill="none" stroke="#d42a2a" stroke-width="1"/><circle cx="1300.5" cy="546.3" r="12" fill="none" stroke="#d42a2a" stroke-width="1"/><g opacity="0.85"><path fill="#8f8f8f" fill-rule="evenodd" d="M827 333.2 L1303 333.2 L1306 336.2 L1306 548.4 L1303 551.4 L827 551.4 L823.9 548.4 L823.9 336.2 Z M835.8 344.4 L835.8 540.2 L1294.4 540.2 L1294.4 344.4 Z M830 333.2 L830 391 L835.8 391 L835.8 344.4 L1294.4 344.4 L1294.4 391 L1301 391 L1301 333.2 Z"/><path fill="#8f8f8f" d="M830 330 L1301 330 L1301 333.2 L830 333.2 Z M835.8 344.4 L1294.4 344.4 L1294.4 391 L835.8 391 Z"/><path fill="#6f6f6f" d="M830 333.2 L1301 333.2 L1301 344.4 L830 344.4 Z M830 344.4 L835.8 344.4 L835.8 391 L830 391 Z M1294.4 344.4 L1301 344.4 L1301 391 L1294.4 391 Z"/></g><text x="1008" y="550.5" font-family="Liberation Mono" font-weight="bold" font-size="11" fill="#7a7a7a" textLength="114" lengthAdjust="spacingAndGlyphs">2SA_TO-220[BCE]</text><circle cx="952" cy="462.8" r="32.35" fill="none" stroke="#3cb88c" stroke-width="19.1"/><circle cx="952" cy="462.8" r="46.6" fill="url(#hatch)" stroke="#8a8a8a" stroke-width="1.2"/><path d="M903.6 415.3 L1000.4 511.3 M1000.4 415.3 L903.6 511.3 M903.4 462.8 L1000.6 462.8" stroke="#8c8c8c" stroke-width="2"/><path d="M 944.49 472.10 L 944.49 453.50 L 957.30 453.50 L 960.51 455.57 L 960.51 460.73 L 957.30 462.80 L 944.49 462.80 M 957.30 462.80 L 960.51 464.87 L 960.51 470.03 L 957.30 472.10 L 944.49 472.10" fill="none" stroke="#858585" stroke-width="1.4" stroke-linecap="round" stroke-linejoin="round"/><circle cx="1065" cy="462.8" r="32.35" fill="none" stroke="#3cb88c" stroke-width="19.1"/><circle cx="1065" cy="462.8" r="46.6" fill="url(#hatch)" stroke="#8a8a8a" stroke-width="1.2"/><path d="M1016.6 415.3 L1113.4 511.3 M1113.4 415.3 L1016.6 511.3 M1016.4 462.8 L1113.6 462.8" stroke="#8c8c8c" stroke-width="2"/><path d="M 1073.51 456.60 Q 1070.31 453.50 1065.50 453.50 Q 1057.49 453.50 1057.49 459.70 L 1057.49 465.90 Q 1057.49 472.10 1065.50 472.10 Q 1070.31 472.10 1073.51 469.00" fill="none" stroke="#858585" stroke-width="1.4" stroke-linecap="round" stroke-linejoin="round"/><circle cx="1177.7" cy="462.8" r="32.35" fill="none" stroke="#3cb88c" stroke-width="19.1"/><circle cx="1177.7" cy="462.8" r="46.6" fill="url(#hatch)" stroke="#8a8a8a" stroke-width="1.2"/><path d="M1129.3 415.3 L1226.1000000000001 511.3 M1226.1000000000001 415.3 L1129.3 511.3 M1129.1000000000001 462.8 L1226.3 462.8" stroke="#8c8c8c" stroke-width="2"/><path d="M 1184.61 453.50 L 1171.79 453.50 L 1171.79 472.10 L 1184.61 472.10 M 1171.79 461.77 L 1181.40 461.77" fill="none" stroke="#858585" stroke-width="1.4" stroke-linecap="round" stroke-linejoin="round"/><path d="M 878.49 437.70 L 855.27 437.70 M 878.49 430.73 L 867.58 430.73 Q 862.94 430.73 862.94 437.70 Q 862.94 444.67 869.90 444.67 Q 877.33 444.67 877.33 437.70 M 879.19 453.69 L 884.30 460.20 L 863.40 460.20 M 863.40 453.69 L 863.40 465.31 M 864.33 476.00 L 863.40 476.00 M 884.30 486.68 L 884.30 494.12 L 878.49 496.21 L 869.21 496.21 L 863.40 494.12 L 863.40 486.68 L 869.21 484.59 L 878.49 484.59 Z M 868.51 484.59 L 878.49 496.21" fill="none" stroke="#a0a0a0" stroke-width="3" stroke-linecap="round" stroke-linejoin="round"/><path d="M715.5 697.5 L715.5 707.5 M715.5 702.5 L952.5 702.5 M952.5 697.5 L952.5 707.5" stroke="#000" stroke-width="1"/><text x="832" y="700.5" font-size="8.5" text-anchor="middle" fill="#000">5mm</text><text x="832" y="711" font-size="8.5" text-anchor="middle" fill="#000">0.2in</text></g></svg>
<svg style="left:0;top:0;will-change:transform" width="1433" height="923"><text x="30.5" y="20" font-size="12" fill="#ffffff" textLength="561" lengthAdjust="spacingAndGlyphs">1 D:¥DATE¥E-work¥_Eagle mmLibrary05_01_00¥H_Q_2SA_TO-220[BCE].lbr (2SA*.dev) - EAGLE 9.4.2 standard</text><text x="6.5" y="52" font-size="13.5" fill="#1e1e1e" textLength="19.6" lengthAdjust="spacingAndGlyphs">File</text><text x="37.7" y="52" font-size="13.5" fill="#1e1e1e" textLength="21" lengthAdjust="spacingAndGlyphs">Edit</text><text x="70.8" y="52" font-size="13.5" fill="#1e1e1e" textLength="29.2" lengthAdjust="spacingAndGlyphs">Draw</text><text x="110.3" y="52" font-size="13.5" fill="#1e1e1e" textLength="27.3" lengthAdjust="spacingAndGlyphs">View</text><text x="148.5" y="52" font-size="13.5" fill="#1e1e1e" textLength="42" lengthAdjust="spacingAndGlyphs">Library</text><text x="200" y="52" font-size="13.5" fill="#1e1e1e" textLength="45" lengthAdjust="spacingAndGlyphs">Options</text><text x="254" y="52" font-size="13.5" fill="#1e1e1e" textLength="44" lengthAdjust="spacingAndGlyphs">Window</text><text x="308" y="52" font-size="13.5" fill="#1e1e1e" textLength="27" lengthAdjust="spacingAndGlyphs">Help</text><text x="782" y="83" font-size="8.5" fill="#222" textLength="31" lengthAdjust="spacingAndGlyphs" font-weight="bold">DESIGN</text><text x="782" y="90" font-size="8.5" fill="#222" textLength="18.5" lengthAdjust="spacingAndGlyphs" font-weight="bold">LINK</text><text x="838" y="88" font-size="12" fill="#222" textLength="88" lengthAdjust="spacingAndGlyphs">[bin/LTspice.svg]</text><text x="974" y="89" font-size="12" fill="#222" textLength="30" lengthAdjust="spacingAndGlyphs" font-weight="bold">PADS</text><text x="172.3" y="128" font-size="12" fill="#1c1c1c" textLength="57.5" lengthAdjust="spacingAndGlyphs">94 Symbols</text><text x="100.4" y="128" font-size="12" fill="#1c1c1c" textLength="29.3" lengthAdjust="spacingAndGlyphs">Layer:</text><text x="78.5" y="165" font-size="12" fill="#1c1c1c" textLength="82" lengthAdjust="spacingAndGlyphs">0.1 inch (0.8 0.2)</text><text x="201" y="165" font-size="11.5" fill="#8a8a8a">Click to activate command line mode. Hint: Assign keyboard shortcut to “SET TOGGLE_CLI;” command</text><text x="78.5" y="745" font-size="12.5" fill="#0000ee" textLength="68" lengthAdjust="spacingAndGlyphs" font-weight="bold">Description</text><rect x="78" y="746" width="68" height="1" fill="#0000ee"/><text x="78.8" y="780.5" font-size="11.5" fill="#1c1c1c" textLength="102" lengthAdjust="spacingAndGlyphs">Keyword = 2SA671C</text><text x="78.8" y="792.4" font-size="11.5" fill="#0000ee" textLength="14" lengthAdjust="spacingAndGlyphs">[A]</text><rect x="78" y="793" width="14" height="1" fill="#0000ee"/><text x="78.8" y="804.3" font-size="11.5" fill="#0000ee" textLength="41" lengthAdjust="spacingAndGlyphs">[K]/non</text><rect x="78" y="805" width="41" height="1" fill="#0000ee"/><text x="78.8" y="816.2" font-size="11.5" fill="#0000ee" textLength="43" lengthAdjust="spacingAndGlyphs">[M]/non</text><rect x="78" y="817" width="43" height="1" fill="#0000ee"/><text x="78.8" y="828.1" font-size="11.5" fill="#0000ee" textLength="41" lengthAdjust="spacingAndGlyphs">[S]/non</text><rect x="78" y="829" width="41" height="1" fill="#0000ee"/><text x="78.8" y="840" font-size="11.5" fill="#1c1c1c" textLength="63" lengthAdjust="spacingAndGlyphs">[Data Sheet]</text><text x="551" y="748" font-size="12" fill="#0000ee" textLength="79" lengthAdjust="spacingAndGlyphs" font-weight="bold">Technologies</text><rect x="551" y="749" width="79" height="1" fill="#0000ee"/><text x="635" y="748" font-size="12" fill="#0000ee" textLength="60" lengthAdjust="spacingAndGlyphs" font-weight="bold">Attributes</text><rect x="635" y="749" width="60" height="1" fill="#0000ee"/><text x="551.5" y="764" font-size="11.5" fill="#1c1c1c" textLength="45.5" lengthAdjust="spacingAndGlyphs">2SA671C</text><text x="715.4" y="732.6" font-size="12" fill="#1c1c1c" textLength="41.7" lengthAdjust="spacingAndGlyphs">Package</text><text x="879.2" y="732.6" font-size="12" fill="#1c1c1c" textLength="35.7" lengthAdjust="spacingAndGlyphs">Variant</text><text x="734.5" y="750.8" font-size="12" fill="#ffffff" textLength="94" lengthAdjust="spacingAndGlyphs">2SA_TO-220[BCE]</text><text x="878.5" y="751" font-size="12" fill="#ffffff">&quot;</text><text x="734.5" y="766.4" font-size="12" fill="#1c1c1c" textLength="104.8" lengthAdjust="spacingAndGlyphs">2SA_TO-220[BCE]_S</text><text x="878.2" y="766.4" font-size="12" fill="#1c1c1c" textLength="5.5" lengthAdjust="spacingAndGlyphs">_</text><text x="883.2" y="766.4" font-size="12" fill="#1c1c1c" textLength="7" lengthAdjust="spacingAndGlyphs">S</text><text x="874.8" y="834" font-size="12" fill="#1c1c1c" textLength="20.6" lengthAdjust="spacingAndGlyphs">New</text><text x="1228.4" y="834" font-size="12" fill="#1c1c1c" textLength="42" lengthAdjust="spacingAndGlyphs">Connect</text><text x="874" y="866" font-size="12" fill="#1c1c1c" textLength="27" lengthAdjust="spacingAndGlyphs">Prefix</text><text x="1077" y="866" font-size="12" fill="#1c1c1c" textLength="8" lengthAdjust="spacingAndGlyphs">Q</text><text x="710.2" y="892.8" font-size="12" fill="#1c1c1c" textLength="28" lengthAdjust="spacingAndGlyphs">Value</text><text x="972.6" y="892.8" font-size="12" fill="#1c1c1c" textLength="15.4" lengthAdjust="spacingAndGlyphs">Off</text><text x="1214.5" y="892.8" font-size="12" fill="#1c1c1c" textLength="15.4" lengthAdjust="spacingAndGlyphs">On</text></svg>
</div></body></html>
